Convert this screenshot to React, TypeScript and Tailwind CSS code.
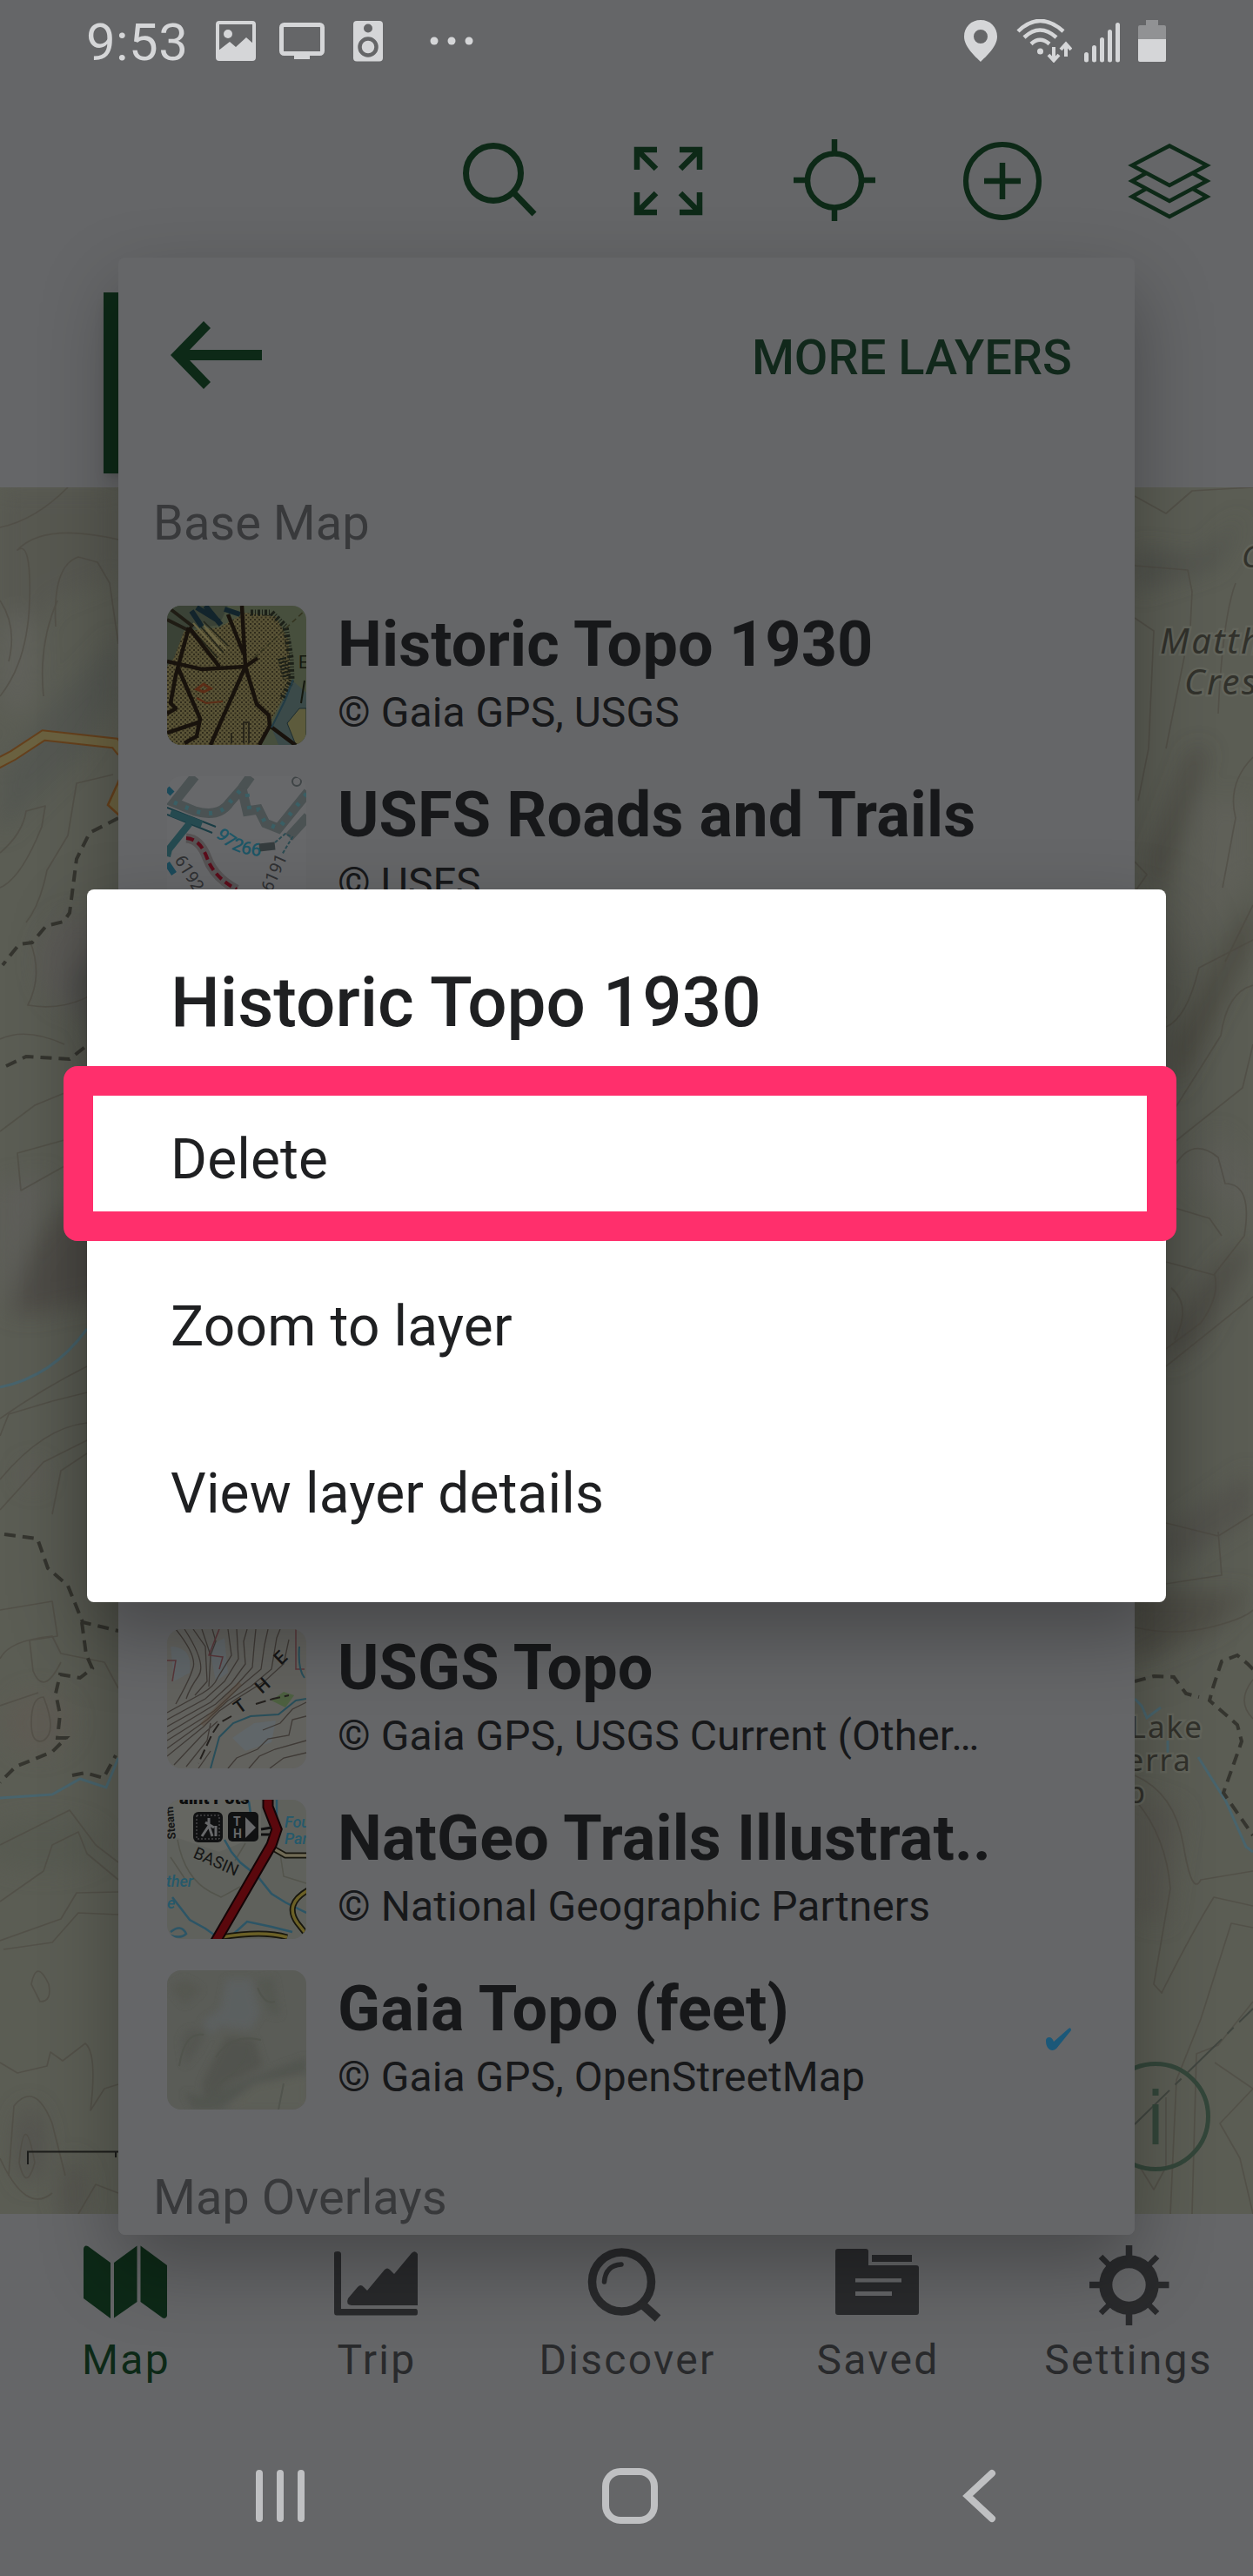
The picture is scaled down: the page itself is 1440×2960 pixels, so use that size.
import type { ReactNode } from 'react';

const GREEN = '#0d2917';
const LIGHT = '#d5d6d8';

function StatusBar() {
    return (
        <div className="flex h-24 shrink-0 items-start justify-between pl-[99px] pr-[100px] text-[#d5d6d8]">
            <div className="flex items-start">
                <span className="mt-[14px] w-[149px] text-[60px] leading-[70px] tracking-[0.4px]">9:53</span>
                {/* picture */}
                <svg className="mt-6 mr-[27px]" width="46" height="46" viewBox="0 0 46 46">
                    <rect x="2" y="2" width="42" height="42" rx="2" fill="none" stroke={LIGHT} strokeWidth="4" />
                    <circle cx="14" cy="15" r="5" fill={LIGHT} />
                    <path d="M3 34 L16 24 L23 30 L35 19 L44 27 V44 H3 Z" fill={LIGHT} />
                </svg>
                {/* screen */}
                <svg className="mt-6 mr-[33px]" width="52" height="46" viewBox="0 0 52 46">
                    <rect x="2.5" y="4.5" width="47" height="33" rx="3" fill="none" stroke={LIGHT} strokeWidth="5" />
                    <rect x="17" y="37" width="18" height="7" fill={LIGHT} />
                </svg>
                {/* speaker */}
                <svg className="mt-6 mr-[54px]" width="34" height="47" viewBox="0 0 34 47">
                    <rect width="34" height="46.500" rx="4" fill={LIGHT} />
                    <circle cx="17" cy="8.500" r="5" fill="#656668" />
                    <circle cx="17" cy="30" r="9.500" fill="none" stroke="#656668" strokeWidth="4.500" />
                </svg>
                <svg className="mt-10" width="50" height="14" viewBox="0 0 50 14">
                    <circle cx="5" cy="7" r="4.500" fill={LIGHT} />
                    <circle cx="25" cy="7" r="4.500" fill={LIGHT} />
                    <circle cx="45" cy="7" r="4.500" fill={LIGHT} />
                </svg>
            </div>
            <div className="mt-[22px] flex items-start">
                {/* location */}
                <svg className="mr-[22px]" width="38" height="50" viewBox="0 0 38 50">
                    <path fillRule="evenodd" d="M19 1 C8 1 0 9 0 20 C0 32 13 43 19 49 C25 43 38 32 38 20 C38 9 30 1 19 1 Z M19 12 a8 8 0 1 1 0 16 a8 8 0 1 1 0 -16 Z" fill={LIGHT} />
                </svg>
                {/* wifi */}
                <svg className="mr-[14px]" width="64" height="50" viewBox="0 0 64 50" fill="none" stroke={LIGHT} strokeWidth="4.500">
                    <path d="M2 14 Q27 -10 54 14" />
                    <path d="M9 21 Q27 4 46 21" />
                    <path d="M17 28.500 Q27 19 38 28.500" />
                    <circle cx="27.500" cy="37" r="3.500" fill={LIGHT} stroke="none" />
                    <path d="M43 32 V47 M37 41 L43 47.500 L49 41" strokeWidth="4" />
                    <path d="M57 43 V29 M51 35 L57 28.500 L63 35" strokeWidth="4" />
                </svg>
                {/* signal */}
                <svg className="mr-[21px]" width="41" height="50" viewBox="0 0 41 50" fill={LIGHT}>
                    <rect x="0" y="38" width="5" height="11.500" rx="2.500" />
                    <rect x="9" y="30" width="5" height="19.500" rx="2.500" />
                    <rect x="18" y="21" width="5" height="28.500" rx="2.500" />
                    <rect x="27" y="12" width="5" height="37.500" rx="2.500" />
                    <rect x="36" y="4" width="5" height="45.500" rx="2.500" />
                </svg>
                {/* battery */}
                <svg width="32" height="50" viewBox="0 0 32 50">
                    <path d="M9 1 H23 V7 H30 Q32 7 32 9 V23 H0 V9 Q0 7 2 7 H9 Z" fill="#919294" />
                    <path d="M0 23 H32 V47 Q32 49 30 49 H2 Q0 49 0 47 Z" fill={LIGHT} />
                </svg>
            </div>
        </div>
    );
}

function Toolbar() {
    return (
        <div className="flex h-[464px] shrink-0 items-start justify-end gap-24 pt-16 pr-12 *:size-24">
            <svg viewBox="0 0 96 96" fill="none" stroke={GREEN} strokeWidth="7">
                <circle cx="39" cy="39" r="31.500" />
                <path d="M62 61 L86 86" />
            </svg>
            <svg viewBox="0 0 96 96" fill="none" stroke={GREEN} strokeWidth="6.500">
                <path d="M12 35 V12 H35 M12 12 L34 34" />
                <path d="M61 12 H84 V35 M84 12 L62 34" />
                <path d="M12 61 V84 H35 M12 84 L34 62" />
                <path d="M61 84 H84 V61 M84 84 L62 62" />
            </svg>
            <svg viewBox="0 0 96 96" fill="none" stroke={GREEN} strokeWidth="6.500">
                <circle cx="47" cy="47.500" r="31" />
                <path d="M47 0 V16 M47 79 V94 M0 47 H16 M78 47 H94" />
            </svg>
            <svg viewBox="0 0 96 96" fill="none" stroke={GREEN} strokeWidth="6">
                <circle cx="48" cy="48" r="42" />
                <path d="M48 27 V69 M27 48 H69" strokeWidth="6.500" />
            </svg>
            <svg viewBox="0 0 96 96" fill="none" stroke={GREEN} strokeWidth="4.500">
                <path d="M48 7.500 L91 30 L48 53 L5 30 Z" />
                <path d="M21 39 L5 48 L48 71 L91 48 L75 39" />
                <path d="M21 57 L5 66 L48 89 L91 66 L75 57" />
            </svg>
        </div>
    );
}

const contours = [
    'M0 46 Q40 38 78 0',
    'M0 240 Q32 200 34 130 T20 72 Q50 40 136 60',
    'M64 160 Q60 90 90 80 L112 86 L126 110 L136 180',
    'M50 240 Q44 180 66 130',
    'M0 130 Q20 160 10 200',
    'M0 420 Q26 398 30 372 L52 366 L48 390 Q24 450 0 460',
    'M30 500 Q46 480 54 440 L78 400 L88 340 L130 330',
    'M34 520 Q50 560 32 595 Q90 605 136 560',
    'M0 634 Q30 620 74 640 M0 740 L40 710 L74 696 M20 765 L24 808 L74 780 L74 750 Z',
    'M0 1070 Q50 1035 100 1010',
    'M0 1090 L10 1065 L60 1050 L100 1040 M0 1140 Q50 1080 100 1075',
    'M0 1175 L50 1120 L100 1095 M60 1180 L70 1130 L100 1110',
    'M0 1290 L60 1280 L66 1320 L34 1325 L38 1360 Q50 1390 70 1350',
    'M0 1346 Q10 1325 60 1320 L70 1340 L120 1350 L136 1380',
    'M0 1400 L44 1385 M36 1420 Q36 1390 50 1390 Q66 1430 50 1440 Q36 1445 36 1420',
    'M0 1560 L60 1530 L80 1520 L110 1560 L136 1580',
    'M0 1625 L50 1590 L60 1560 L90 1545 L100 1570 L136 1600',
    'M0 1670 L70 1645 L88 1615 L136 1614 M4 1680 L60 1672 L90 1638 L136 1640',
    'M36 1720 Q42 1690 56 1720 Q60 1740 46 1740 Z',
    'M0 1810 L20 1822 L54 1814 L58 1798 L72 1808 L98 1788 Q112 1800 104 1865 L120 1840 L136 1835',
    'M10 1940 L16 1860 Q40 1830 60 1880 L75 1940 M22 1925 Q28 1860 40 1925 Q30 1960 22 1925',
    'M0 1920 Q30 1985 60 1960 M90 1984 L110 1950 L136 1960',
    'M1304 10 L1340 30 L1370 4 L1440 0',
    'M1304 90 L1365 95 L1370 120 L1368 160 L1340 300 M1420 110 Q1405 150 1400 260',
    'M1304 150 L1326 165 L1320 300 L1308 360',
    'M1440 310 Q1410 340 1420 380 L1405 460 M1304 430 L1318 445 L1304 465',
    'M1340 620 Q1364 610 1378 552 L1440 520 M1408 545 L1440 480',
    'M1304 480 L1340 610 M1440 572 Q1410 580 1403 630 L1340 730 M1440 640 L1428 690 L1340 760',
    'M1350 780 Q1370 745 1400 770 L1408 800 Q1440 800 1430 860 L1395 905 L1340 890',
    'M1340 825 L1390 840 L1404 860 M1396 905 Q1402 930 1380 960 L1340 990 M1440 930 L1340 1010',
    'M1346 920 Q1370 940 1350 980 M1440 1180 L1400 1205 L1340 1190 M1400 1200 L1404 1250 L1340 1260',
    'M1304 1310 Q1350 1320 1390 1310 T1440 1290 M1440 1370 Q1420 1395 1440 1415',
    'M1304 1480 Q1350 1500 1360 1560 T1380 1600 L1440 1590 M1306 1510 Q1340 1550 1345 1610 L1326 1720 L1335 1730 Q1370 1660 1395 1620 L1440 1630',
    'M1440 1655 L1415 1650 L1380 1760 L1352 1830 L1345 1984 M1440 1740 L1400 1790 L1375 1800 L1370 1984',
    'M1396 1810 L1440 1840 L1402 1880 L1425 1920 L1440 1984 M1310 1930 L1326 1956 L1340 1930 V1850',
];

const trails = [
    'M136 380 L103 397 L88 427 L80 489 L73 499 L53 504 L37 523 L22 525 L3 549',
    'M7 665 L30 654 L80 657 L104 638',
    'M5 1203 L43 1208 L55 1242 L78 1262 L95 1304 L136 1314',
    'M94 1304 L99 1341 L106 1357 L92 1368 L69 1364 L64 1386 L69 1410 L66 1437 L76 1437 L60 1453 L18 1470 L0 1488',
    'M83 1480 L98 1477 L119 1483 L133 1457',
    'M1304 1372 L1326 1366 L1349 1367 L1363 1386 L1378 1390',
    'M1440 1358 L1434 1352 L1422 1342 L1404 1349 L1394 1379 L1390 1394 L1422 1422 L1427 1441 L1406 1500 L1440 1549',
];

function TopoMap() {
    return (
        <div className="h-[1984px] shrink-0 overflow-hidden bg-[#5b5d54]">
            <svg width="1440" height="1984" viewBox="0 0 1440 1984" fill="none">
                <defs>
                    <filter id="relief" x="-50%" y="-50%" width="200%" height="200%">
                        <feGaussianBlur stdDeviation="13" />
                    </filter>
                </defs>
                {/* hill shading */}
                <g filter="url(#relief)" opacity="0.6">
                    <path d="M0 0 H136 V100 L60 130 L0 230 Z" fill="#54544f" />
                    <path d="M136 240 L90 310 L0 400 V330 L60 250 L136 170 Z" fill="#50524f" />
                    <ellipse cx="20" cy="200" rx="24" ry="60" fill="#63635e" />
                    <ellipse cx="90" cy="545" rx="46" ry="55" fill="#5e5b5b" />
                    <path d="M136 500 V700 L80 570 Z" fill="#4b4c4c" />
                    <path d="M136 780 L60 840 L30 890 L12 950 H40 L136 930 Z" fill="#464340" />
                    <path d="M0 800 L60 790 L10 930 L0 950 Z" fill="#62615f" />
                    <ellipse cx="38" cy="1135" rx="14" ry="14" fill="#605b58" />
                    <ellipse cx="44" cy="1420" rx="40" ry="36" fill="#605a52" />
                    <ellipse cx="50" cy="1560" rx="70" ry="30" fill="#555850" />
                    <ellipse cx="34" cy="1905" rx="18" ry="46" fill="#4f4d4c" />
                    <ellipse cx="84" cy="1960" rx="16" ry="40" fill="#4f4d4a" />
                    <path d="M1304 70 L1380 80 L1430 30 L1400 90 L1304 120 Z" fill="#4a4b46" />
                    <path d="M1388 300 L1330 480 L1320 430 L1370 300 Z" fill="#42413b" />
                    <path d="M1440 520 L1350 700 V640 L1440 470 Z" fill="#434139" />
                    <path d="M1380 360 H1440 V440 L1350 560 Z" fill="#62625b" />
                    <path d="M1440 780 L1400 740 L1360 790 L1440 850 Z" fill="#60605b" />
                    <path d="M1440 870 L1380 980 L1340 1010 V970 L1410 880 Z" fill="#45423d" />
                    <path d="M1440 1180 L1340 1240 V1200 L1440 1130 Z" fill="#504d49" />
                    <path d="M1304 1270 H1440 L1400 1310 L1304 1350 Z" fill="#4a4741" />
                    <path d="M1304 1500 L1360 1520 L1340 1650 L1304 1640 Z" fill="#54524d" />
                </g>
                <g stroke="#4d4941" strokeWidth="1.700" strokeLinejoin="round" opacity="0.6">
                    {contours.map((d) => (
                        <path key={d} d={d} />
                    ))}
                </g>
                {/* highway */}
                <path d="M-4 318 L15 308 L50 285 L132 294 L140 304" stroke="#65401c" strokeWidth="13" />
                <path d="M-4 318 L15 308 L50 285 L132 294 L140 304" stroke="#6a6140" strokeWidth="9" />
                <path d="M138 334 L124 365 L138 378 Z" fill="#6a6140" stroke="#65401c" strokeWidth="2.500" />
                {/* streams */}
                <g stroke="#48646d" strokeWidth="3">
                    <path d="M0 1034 Q60 1022 100 967" />
                    <path d="M0 1506 L60 1502 L92 1484 L122 1494 L136 1460" />
                    <path d="M1304 1392 L1312 1400 L1318 1414 L1334 1402 M1342 1440 V1455" />
                    <path d="M1377 1459 L1409 1510 L1432 1562 L1440 1568" />
                </g>
                <g stroke="#35352f" strokeWidth="4" strokeDasharray="13 8">
                    {trails.map((d) => (
                        <path key={d} d={d} />
                    ))}
                </g>
                <path d="M1304 1881 L1440 1748" stroke="#414640" strokeWidth="2" strokeDasharray="56 9 10 9" />
                {/* place names */}
                <g fill="#31312b" stroke="#62645b" strokeWidth="5" paintOrder="stroke" fontFamily="Noto Sans, sans-serif">
                    <g fontStyle="italic" fontSize="40" letterSpacing="2.500">
                        <text x="1427" y="92" fontSize="35">C</text>
                        <text x="1333" y="191">Matth</text>
                        <text x="1361" y="238">Cres</text>
                    </g>
                    <g fontSize="35" textAnchor="end" letterSpacing="2">
                        <text x="1383" y="1437">Lake</text>
                        <text x="1370" y="1475">erra</text>
                        <text x="1318" y="1512">p</text>
                    </g>
                </g>
                {/* info button */}
                <circle cx="1328" cy="1872" r="60.500" stroke="#33463a" strokeWidth="5" />
                <path d="M1328 1840 V1848 M1328 1858 V1904" stroke="#33463a" strokeWidth="7" />
                {/* distance scale */}
                <path d="M32 1927 V1912.500 H140 M133 1912 V1919" stroke="#1c1d1b" strokeWidth="2" />
            </svg>
        </div>
    );
}

const tabs: { label: string; color: string; icon: ReactNode }[] = [
    {
        label: 'Map',
        color: 'text-[#0d2917]',
        icon: (
            <>
                <path d="M0 8 Q1 3 5 5 L31 24 V88 L0 65 Z" />
                <path d="M35 24 L61.500 4.500 V69 L35 87.500 Z" />
                <path d="M65.500 4.500 L96 27 V85 Q95 89 91 87.500 L65.500 69 Z" />
            </>
        ),
    },
    {
        label: 'Trip',
        color: 'text-[#292a2c]',
        icon: (
            <>
                <path d="M0 13 Q0 11 4 11 Q8 11 8 14 V77 H94 Q96 77 96 81 Q96 84.500 94 84.500 H3 Q0 84.500 0 81 Z" />
                <path d="M16 65 L27 52 Q30.500 48 34 52 L38 56 L58 32 Q61 29 64 32 L69 37 L89 13 Q93 9 96 14 V73 H20 Q13 72 16 65 Z" />
            </>
        ),
    },
    {
        label: 'Discover',
        color: 'text-[#292a2c]',
        icon: (
            <g fill="none" stroke="currentColor">
                <circle cx="42.500" cy="46" r="34" strokeWidth="9.500" />
                <path d="M22.500 46 Q24 27 42 26" strokeWidth="5.500" strokeLinecap="round" />
                <path d="M64 70 L84 88" strokeWidth="10" />
            </g>
        ),
    },
    {
        label: 'Saved',
        color: 'text-[#292a2c]',
        icon: (
            <>
                <path fillRule="evenodd" d="M3 8 H35 Q38 8 38 11 V27 H93 Q96 27 96 30 V81 Q96 84 93 84 H3 Q0 84 0 81 V11 Q0 8 3 8 Z M23 42 V46.500 H76 V42 Z M23 57 V62 H65 V57 Z" />
                <rect x="42" y="15" width="46" height="8" />
            </>
        ),
    },
    {
        label: 'Settings',
        color: 'text-[#292a2c]',
        icon: (
            <g fill="none" stroke="currentColor">
                <circle cx="49.500" cy="49.500" r="26.700" strokeWidth="15" />
                <path d="M49.500 4 V20 M49.500 79 V96 M4 49.500 H20 M79 49.500 H95.500" strokeWidth="7.500" />
                <path d="M17 17 L28 28 M82 17 L71 28 M17 82 L28 71 M82 82 L71 71" strokeWidth="6.500" />
            </g>
        ),
    },
];

function TabBar() {
    return (
        <div className="grid h-56 shrink-0 grid-cols-5 pt-8">
            {tabs.map((tab) => (
                <div key={tab.label} className={`flex flex-col items-center ${tab.color}`}>
                    <svg width="96" height="96" viewBox="0 0 96 96" fill="currentColor">
                        {tab.icon}
                    </svg>
                    <span className="mt-3 pl-0.5 text-[48px] leading-[56px] tracking-[2.3px]">{tab.label}</span>
                </div>
            ))}
        </div>
    );
}

function NavBar() {
    return (
        <div className="flex h-[192px] shrink-0 justify-center gap-[338px] pt-[68px] pl-2 *:h-16 *:w-16">
            <svg viewBox="0 0 64 64" fill="none" stroke="#bfc0c2" strokeWidth="8" strokeLinecap="round">
                <path d="M8 6 V58 M32 6 V58 M56 6 V58" />
            </svg>
            <svg viewBox="0 0 64 64" fill="none" stroke="#bfc0c2" strokeWidth="8">
                <rect x="4" y="4" width="56" height="56" rx="17" />
            </svg>
            <svg viewBox="0 0 64 64" fill="none" stroke="#bfc0c2" strokeWidth="8" strokeLinecap="round">
                <path d="M46 6 L18 32 L46 58" />
            </svg>
        </div>
    );
}

function HistoricThumb() {
    return (
        <svg viewBox="0 0 160 160" fill="none">
            <defs>
                <pattern id="dots" width="5" height="5" patternUnits="userSpaceOnUse">
                    <rect width="5" height="5" fill="#5a5436" />
                    <rect width="2" height="2" fill="#302c1c" />
                    <rect x="2.500" y="2.500" width="2" height="2" fill="#322d1c" />
                </pattern>
            </defs>
            <rect width="160" height="160" fill="#474f3d" />
            <path d="M0 70 L14 30 L60 25 L90 8 L125 12 L140 40 L142 90 L118 135 L108 160 H0 Z" fill="url(#dots)" />
            <path d="M0 0 H70 L60 22 L20 28 L8 60 L0 70 Z" fill="#3a4236" />
            <path d="M128 160 L120 140 L143 85 L160 100 V160 Z" fill="#3b4a49" />
            <path d="M138 135 L152 118 H160 V160 H148 Z" fill="#5d5b3c" stroke="#1c2c30" />
            <path d="M30 20 L62 55 M38 18 L68 50 M44 26 L60 45" stroke="#6a6442" strokeWidth="2" />
            <path d="M26 24 L58 60 M35 20 L65 54 M42 18 L70 46" stroke="#23251a" strokeWidth="1.500" />
            <path d="M34 2 L60 18 M44 0 L62 22 M28 6 L40 24 M66 4 L84 10" stroke="#12242c" strokeWidth="6" />
            <path d="M4 4 L30 24 M0 16 L24 28" stroke="#1f1c14" strokeWidth="4" />
            <g stroke="#18120c" strokeWidth="4.500" strokeLinejoin="round">
                <path d="M0 64 L40 73 L90 70 L104 60 M25 25 L60 70 M25 25 L10 80 L4 112 L10 118 L0 124" />
                <path d="M13 72 L38 130 L34 150 L20 158 M36 134 L0 146" />
                <path d="M86 0 L90 70 L50 160 M70 10 L88 55 M90 70 L103 113 L117 126 L118 138 L106 160 M118 138 L150 162" />
            </g>
            <path d="M96 8 L120 8 L136 24 L142 60 L143 85 L132 108" stroke="#1c2018" strokeWidth="7" strokeDasharray="3 2 1 2" />
            <path d="M132 60 L138 84" stroke="#1c2018" strokeWidth="10" strokeDasharray="2 2" />
            <path d="M120 140 L136 108 L145 85" stroke="#223c46" strokeWidth="2" />
            <path d="M34 96 L42 90 L50 95 L42 99 Z" stroke="#5c2c16" strokeWidth="3" />
            <path d="M34 106 L45 112 L64 110" stroke="#5c2c16" strokeWidth="2" />
            <path d="M88 158 V134 H94 V158 M74 158 V146" stroke="#29261a" strokeWidth="2" />
            <path d="M100 60 L160 4" stroke="#33331f" strokeWidth="1.500" strokeDasharray="6 4" />
            <text x="151" y="72" fontSize="20" fill="#15180f">E</text>
            <path d="M158 86 L154 112" stroke="#15180f" strokeWidth="2" />
        </svg>
    );
}

function UsfsThumb() {
    return (
        <svg viewBox="0 0 160 160" fill="none">
            <rect width="160" height="160" fill="#67686a" />
            <g stroke="#4b5253" strokeWidth="11">
                <path d="M32 0 L8 30 L32 40 Q60 48 72 30 L86 14 L96 0" />
                <path d="M86 14 L92 40 L105 38 L113 54 L128 60 L162 18 M140 70 L162 46" />
            </g>
            <g stroke="#3a5f65" strokeWidth="5" strokeDasharray="4 10">
                <path d="M8 30 L32 40 Q60 48 72 30 L86 14" />
                <path d="M92 20 L95 40 L105 38 L113 54 L128 60 L162 18" />
            </g>
            <path d="M0 36 L56 58 M0 44 L52 65" stroke="#193c44" strokeWidth="2" />
            <path d="M4 42 L40 55 M26 54 L2 84 L0 92" stroke="#254a50" strokeWidth="8" />
            <path d="M0 14 L6 20 M0 100 L8 112" stroke="#1b4a5a" strokeWidth="7" />
            <path d="M22 71 Q38 72 46 94 T80 130" stroke="#565354" strokeWidth="11" />
            <path d="M22 71 Q38 72 46 94 T80 130" stroke="#5c0d1b" strokeWidth="4" strokeDasharray="9 5" />
            <path d="M106 82 L124 80" stroke="#353c3e" strokeWidth="9" />
            <path id="road-number" d="M55 68 Q74 92 114 92" />
            <text fontSize="21" fontWeight="500" fill="#1d5666">
                <textPath href="#road-number">97266</textPath>
            </text>
            <text transform="translate(8 96) rotate(58)" fontSize="20" fill="#303133">6192</text>
            <text transform="translate(120 134) rotate(-66)" fontSize="20" fill="#303133">6191</text>
            <path d="M124 76 L136 66 L144 70 L132 90" stroke="#2c4b52" strokeWidth="2" strokeDasharray="4 2" />
            <circle cx="149" cy="6" r="5" stroke="#3f4446" strokeWidth="2" />
        </svg>
    );
}

function UsgsThumb() {
    return (
        <svg viewBox="0 0 160 160" fill="none">
            <rect width="160" height="160" fill="#62625e" />
            <path d="M4 20 Q30 20 26 50 L8 60 Z M48 20 L56 60 L70 50 L66 10 Z M75 125 L100 108 L125 105 L120 130 L90 140 Z" fill="#606669" />
            <path d="M120 82 L134 72 L146 76 L136 90 Z" fill="#4d6040" />
            <g stroke="#3f3a36" strokeWidth="1.300">
                <path d="M0 96 L40 74 Q54 66 58 56 L74 30 L70 0 M0 104 L44 80 L66 60 L82 34 L80 0 M0 112 L50 84 L74 62 L90 40 L88 14 L92 0" />
                <path d="M0 120 L56 86 L80 64 L98 44 L100 20 L102 0 M0 128 L54 94 L84 66 L108 46 L112 18 L116 0 M0 137 L46 104 L70 82 L96 66 L120 46 L126 10 L130 0" />
                <path d="M0 146 L42 112 L60 94 L80 80 L112 60 L134 40 L140 12 M8 156 L40 122 L58 106 M22 158 L46 128 L50 108 M36 160 L50 140" />
                <path d="M10 0 Q34 30 30 44 T10 86 M20 0 Q46 40 36 54 T22 80 M30 0 L44 20 L46 60 L32 76 M40 0 L50 30 L48 66 M52 0 L56 14 L50 30" />
                <path d="M70 160 L80 148 L104 138 L116 126 L140 122 L144 104 L160 100 M94 160 L106 146 L124 138 L160 128 M118 160 L134 148 L160 142 M110 116 L130 108 L144 92 L160 84" />
            </g>
            <path d="M60 0 L48 30 L64 32 L60 46 M0 36 H10 L6 60 M148 0 V46 H158" stroke="#59363a" strokeWidth="1.500" />
            <path d="M40 110 L62 86 L84 62" stroke="#5a4435" strokeWidth="5" opacity=".35" />
            <path d="M50 160 L60 124 L76 108 L96 100 L128 98 L148 82 L160 80 M152 20 Q150 46 158 56" stroke="#284e5a" strokeWidth="2" />
            <path d="M74 100 L60 108 L52 120 L36 154 M102 86 L122 80 L140 76" stroke="#24211e" strokeWidth="2" strokeDasharray="12 5" />
            <g fontSize="21" fontWeight="500" fill="#161616">
                <text transform="translate(83 98) rotate(-36)">T</text>
                <text transform="translate(109 75) rotate(-42)">H</text>
                <text transform="translate(131 42) rotate(-44)">E</text>
            </g>
        </svg>
    );
}

function NatGeoThumb() {
    return (
        <svg viewBox="0 0 160 160" fill="none">
            <rect width="160" height="160" fill="#5f615c" />
            <path d="M0 0 H108 V40 L60 60 L0 40 Z" fill="#656661" />
            <path d="M12 46 Q20 90 50 106 L62 112 L84 100 M90 50 L78 70 M130 62 L134 88 L160 96 M20 90 L4 66" stroke="#53544c" strokeWidth="1.500" />
            <g stroke="#2c5566" strokeWidth="2.500">
                <path d="M66 46 L74 60 L84 72 L104 88 L120 108 L136 118 L160 130" />
                <path d="M6 112 L26 138 L44 148 L58 158 M70 160 L92 140 L120 146 L144 152 M126 0 V30 M94 2 L98 30 M4 152 Q16 142 22 154 Q16 160 4 156" />
            </g>
            <path d="M122 56 L136 64 H162 M162 104 Q134 120 150 142 L158 152 M62 158 Q110 150 138 158" stroke="#17160e" strokeWidth="7" />
            <path d="M122 56 L136 64 H162" stroke="#706a55" strokeWidth="3.500" />
            <path d="M162 104 Q134 120 150 142 L158 152 M62 158 Q110 150 138 158" stroke="#6b6026" strokeWidth="3.500" />
            <path d="M116 -4 V8 L126 34 L120 52 L54 166" stroke="#150406" strokeWidth="13" />
            <path d="M116 -4 V8 L126 34 L120 52 L54 166" stroke="#5a080d" strokeWidth="9" />
            <path d="M108 34 L120 32 M108 40 L118 40" stroke="#111" strokeWidth="3" />
            <rect x="30" y="14" width="34" height="35" rx="6" fill="#101112" />
            <rect x="34" y="18" width="26" height="27" stroke="#5c5d5e" strokeDasharray="2 2" />
            <path d="M48 21 V30 L40 42 M48 30 L52 42 M44 26 L54 32 M56 30 V42" stroke="#67686a" strokeWidth="3" />
            <rect x="70" y="14" width="35" height="34" rx="5" fill="#101112" />
            <path d="M90 20 L102 32 L90 44 Z" fill="#67686a" />
            <g fontWeight="700" fill="#67686a" fontSize="14">
                <text x="76" y="30">T</text>
                <text x="76" y="44">H</text>
            </g>
            <text x="14" y="5" fontSize="20" fontWeight="900" fill="#0d0e0e">aint Pots</text>
            <text transform="translate(29 66) rotate(24)" fontSize="19" fill="#151616">BASIN</text>
            <text transform="translate(10 45) rotate(-95)" fontSize="13" fontWeight="700" fill="#151616">Steam</text>
            <g fontSize="18" fontStyle="italic" fontWeight="500" fill="#25596b">
                <text x="-1" y="100">ther</text>
                <text x="0" y="125">e</text>
                <text x="135" y="32">Fou</text>
                <text x="135" y="51">Par</text>
            </g>
        </svg>
    );
}

function GaiaThumb() {
    return (
        <svg viewBox="0 0 160 160" fill="none">
            <defs>
                <filter id="soft">
                    <feGaussianBlur stdDeviation="4" />
                </filter>
            </defs>
            <rect width="160" height="160" fill="#5a5c57" />
            <g filter="url(#soft)" opacity="0.75">
                <path d="M68 10 H96 L106 50 L96 68 L60 64 L52 74 L40 60 L62 44 Z" fill="#5d6264" />
                <path d="M50 110 L68 76 L100 78 L110 110 L70 130 L44 150 L40 130 Z" fill="#4f514c" />
                <path d="M16 80 Q24 60 44 72 L36 90 L20 110 Z" fill="#535550" />
                <path d="M102 12 L118 50 L130 52 L122 8 Z" fill="#535650" />
                <path d="M20 140 L44 146 L90 126 L160 100 V118 L100 130 L60 160 H30 Z" fill="#50524d" />
                <path d="M66 160 L100 132 L160 120 V160 Z" fill="#5f6059" />
                <path d="M4 20 L20 40 L40 22 L20 10 Z" fill="#555650" />
            </g>
            <path d="M104 20 Q112 40 124 36 M56 100 Q74 72 108 80 M128 160 L134 130 M14 110 Q20 70 42 74 M60 130 Q90 110 92 90" stroke="#51544d" strokeWidth="2" />
        </svg>
    );
}

type LayerProps = { thumb: ReactNode; title: string; credit: string; selected?: boolean };

function Layer({ thumb, title, credit, selected }: LayerProps) {
    return (
        <div className="flex h-40 items-start">
            <div className="mr-9 size-40 shrink-0 overflow-hidden rounded-2xl">{thumb}</div>
            <div className="grow text-[#17181a]">
                <h3 className="mt-[3px] text-[72px] leading-[84px] font-bold tracking-[0.12px] whitespace-nowrap">{title}</h3>
                <p className="mt-2 text-[48px] leading-[56px] tracking-[0.06px] whitespace-nowrap">{credit}</p>
            </div>
            {selected && (
                <svg className="mt-[66px] shrink-0" width="30" height="28" viewBox="0 0 30 28" fill="#1b5879">
                    <path d="M0 15 Q0 11 4 11 Q7 11 9 16 L26 1 Q29 -1 29 3 L12 24 Q7 28 3 24 Q0 21 0 15 Z" />
                </svg>
            )}
        </div>
    );
}

function LayersPanel() {
    return (
        <div className="absolute top-[296px] left-[136px] h-[2272px] w-[1168px] overflow-clip rounded-lg bg-[#656668] pl-14 pr-[72px]">
            <div className="flex h-56 items-center justify-between pl-1">
                <svg width="106" height="78" viewBox="0 0 106 78" fill={GREEN}>
                    <path d="M38 0 L46 8 L22 33 H105 V45 H22 L46 70 L38 78 L0 39 Z" />
                </svg>
                <span className="pt-1.5 text-[56px] leading-[66px] font-medium text-[#11281b]">MORE LAYERS</span>
            </div>
            <h2 className="-ml-4 mt-12 text-[56px] leading-[66px] text-[#38393b]">Base Map</h2>
            <div className="mt-[62px] flex flex-col gap-9">
                <Layer thumb={<HistoricThumb />} title="Historic Topo 1930" credit="© Gaia GPS, USGS" />
                <Layer thumb={<UsfsThumb />} title="USFS Roads and Trails" credit="© USFS" />
            </div>
            <div className="mt-[820px] flex flex-col gap-9">
                <Layer thumb={<UsgsThumb />} title="USGS Topo" credit="© Gaia GPS, USGS Current (Other…" />
                <Layer thumb={<NatGeoThumb />} title="NatGeo Trails Illustrat.." credit="© National Geographic Partners" />
                <Layer thumb={<GaiaThumb />} title="Gaia Topo (feet)" credit="© Gaia GPS, OpenStreetMap" selected />
            </div>
            <h2 className="-ml-4 mt-[68px] text-[56px] leading-[66px] text-[#38393b]">Map Overlays</h2>
        </div>
    );
}

function LayerMenu() {
    return (
        <div className="absolute top-[1022px] left-[100px] h-[819px] w-[1240px] rounded-lg bg-white pl-24 text-[#1f2022] shadow-[0_36px_90px_rgba(0,0,0,0.32)]">
            <h1 className="pt-[83px] text-[80px] leading-[94px] font-medium">Historic Topo 1930</h1>
            <ul className="mt-[38px] text-[64px] tracking-[0.15px] *:h-48 *:leading-[192px]">
                <li>Delete</li>
                <li>Zoom to layer</li>
                <li>View layer details</li>
            </ul>
            {/* highlight around Delete */}
            <div className="absolute top-[203px] -left-[27px] h-[201px] w-[1279px] rounded-2xl border-[34px] border-[#ff2f6c]"></div>
        </div>
    );
}

export default function App() {
    return (
        <div className="relative flex h-[2960px] w-[1440px] flex-col overflow-hidden bg-[#656668] font-[Roboto,sans-serif]">
            <StatusBar />
            <Toolbar />
            <TopoMap />
            <TabBar />
            <NavBar />
            {/* bookmark edge */}
            <div className="absolute top-[336px] left-[119px] h-[208px] w-8 bg-[#0d2917] shadow-lg"></div>
            <div className="absolute top-[296px] left-[136px] h-[2272px] w-[1168px] rounded-lg shadow-[0_36px_90px_rgba(0,0,0,0.3)]"></div>
            <LayersPanel />
            <LayerMenu />
        </div>
    );
}
